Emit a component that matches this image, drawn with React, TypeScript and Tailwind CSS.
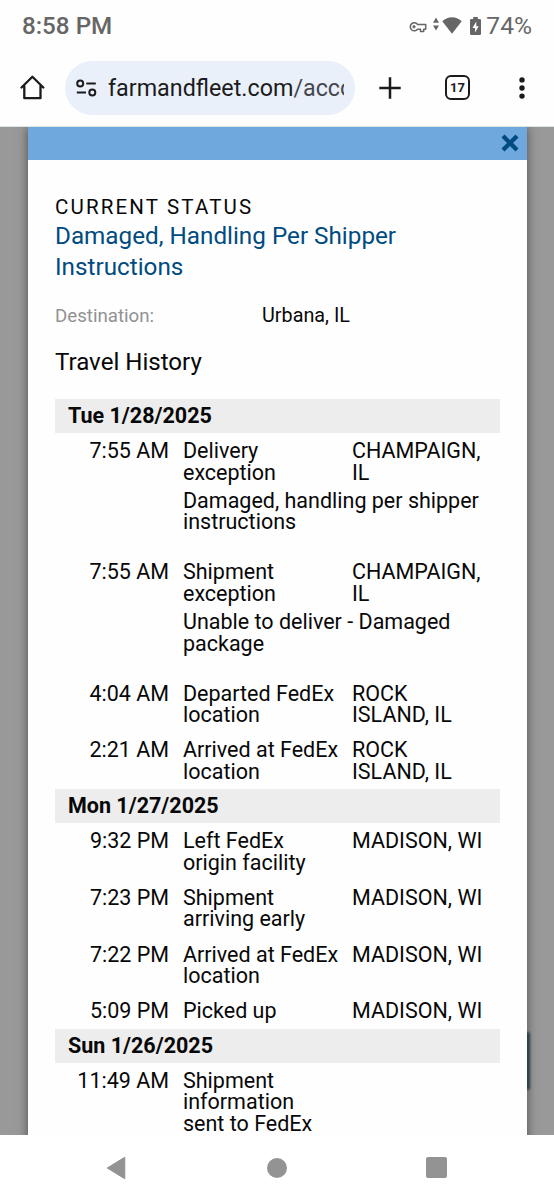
type Event = {
  time: string;
  status: string[];
  place: string[];
  detail?: string[];
};

type Day = { date: string; events: Event[] };

const days: Day[] = [
  {
    date: "Tue 1/28/2025",
    events: [
      {
        time: "7:55 AM",
        status: ["Delivery", "exception"],
        place: ["CHAMPAIGN,", "IL"],
        detail: ["Damaged, handling per shipper", "instructions"],
      },
      {
        time: "7:55 AM",
        status: ["Shipment", "exception"],
        place: ["CHAMPAIGN,", "IL"],
        detail: ["Unable to deliver - Damaged", "package"],
      },
      { time: "4:04 AM", status: ["Departed FedEx", "location"], place: ["ROCK", "ISLAND, IL"] },
      { time: "2:21 AM", status: ["Arrived at FedEx", "location"], place: ["ROCK", "ISLAND, IL"] },
    ],
  },
  {
    date: "Mon 1/27/2025",
    events: [
      { time: "9:32 PM", status: ["Left FedEx", "origin facility"], place: ["MADISON, WI"] },
      { time: "7:23 PM", status: ["Shipment", "arriving early"], place: ["MADISON, WI"] },
      { time: "7:22 PM", status: ["Arrived at FedEx", "location"], place: ["MADISON, WI"] },
      { time: "5:09 PM", status: ["Picked up"], place: ["MADISON, WI"] },
    ],
  },
  {
    date: "Sun 1/26/2025",
    events: [
      { time: "11:49 AM", status: ["Shipment", "information", "sent to FedEx"], place: [] },
    ],
  },
];

function Lines({ lines }: { lines: string[] }) {
  return (
    <div className="whitespace-nowrap">
      {lines.map((line) => (
        <div key={line}>{line}</div>
      ))}
    </div>
  );
}

function EventRow({ event }: { event: Event }) {
  return (
    <div className="text-[21.5px] leading-[21.4px]">
      <div className="grid grid-cols-[114px_155px_1fr] gap-x-[14px] py-[6.95px]">
        <div className="whitespace-nowrap text-right">{event.time}</div>
        <Lines lines={event.status} />
        <Lines lines={event.place} />
      </div>
      {event.detail && (
        <div className="pb-[21.6px] pl-[128px]">
          <Lines lines={event.detail} />
        </div>
      )}
    </div>
  );
}

function StatusBar() {
  return (
    <header className="flex h-[53px] items-center justify-between pl-[22px] pr-[22px] text-[#666]">
      <span className="text-[24.2px] font-medium leading-none">8:58 PM</span>
      <div className="flex items-center">
        <svg width="18" height="12" viewBox="0 0 18 12" fill="none" stroke="currentColor" strokeWidth="1.5">
          <path d="M8.5 3.4A4 4 0 1 0 8.5 8.2H11.5V10.4H14.7V8.2H16.7V3.4Z" strokeLinejoin="round" />
          <circle cx="5" cy="5.8" r="1.2" fill="currentColor" strokeWidth="0.8" />
        </svg>
        <svg className="ml-[6px] mt-[-6px]" width="6" height="14" viewBox="0 0 6 14" fill="currentColor">
          <path d="M0 5.8 3 .5 6 5.8ZM0 8.4H6L3 13.5Z" />
        </svg>
        <svg className="ml-[3px] mt-[-3px]" width="20" height="17" viewBox="0 0 20 17" fill="currentColor">
          <path d="M.3 4.3Q4.8.3 10 .3T19.7 4.3L10 16.7Z" />
        </svg>
        <svg className="ml-[8.5px] mt-[-2px]" width="11" height="18" viewBox="0 0 11 18">
          <path d="M3.2 0H7.8V2H9.8Q11 2 11 3.2V16.8Q11 18 9.8 18H1.2Q0 18 0 16.8V3.2Q0 2 1.2 2H3.2Z" fill="currentColor" />
          <path d="M6.3 4.5 2.5 11H5V15.6L8.7 9.2H6.3Z" fill="white" />
        </svg>
        <span className="ml-[5px] text-[24.6px] leading-none">74%</span>
      </div>
    </header>
  );
}

function BrowserBar() {
  return (
    <div className="flex h-[74px] items-center border-b border-[#dde5e3] pb-[4px] pl-[20px] text-[#1b1b1d]">
      <svg width="25" height="25" viewBox="0 0 25 25" fill="none" stroke="currentColor" strokeWidth="2.3" strokeLinejoin="round" strokeLinecap="round">
        <path d="M1.5 12.5 12.4 1.8 23.3 12.5M4.3 11V23.2H20.5V11" />
      </svg>
      <div className="ml-[20px] flex h-[54px] w-[290px] items-center rounded-full bg-[#eaf0fa] pl-[11px] pr-[10px]">
        <svg className="shrink-0" width="21" height="18" viewBox="0 0 21 18" fill="none" stroke="currentColor" strokeWidth="2">
          <circle cx="4.2" cy="4.5" r="3" />
          <path d="M10.3 4.5H19.8M.8 13.5H10" />
          <circle cx="16.3" cy="13.5" r="3" />
        </svg>
        <div className="ml-[11px] w-[236px] overflow-hidden whitespace-nowrap pt-px text-[23.3px] leading-[34px]">
          farmandfleet.com<span className="text-[#46484d]">/acco</span>
        </div>
      </div>
      <svg className="ml-[24px]" width="22" height="22" viewBox="0 0 22 22" fill="none" stroke="currentColor" strokeWidth="2.5">
        <path d="M11 .3V21.7M.3 11H21.7" />
      </svg>
      <div className="ml-[44px] flex h-[25px] w-[25px] items-center justify-center rounded-[6px] border-[2.5px] border-current text-[13px] font-bold leading-none">
        17
      </div>
      <svg className="ml-[49px]" width="6" height="22" viewBox="0 0 6 22" fill="currentColor">
        <circle cx="3" cy="2.9" r="2.7" />
        <circle cx="3" cy="11" r="2.7" />
        <circle cx="3" cy="19.1" r="2.7" />
      </svg>
    </div>
  );
}

function NavigationBar() {
  return (
    <nav className="flex h-[65px] shrink-0 items-center bg-white pl-[106px] text-[#939393]">
      <svg width="20" height="24" viewBox="0 0 20 24" fill="currentColor" stroke="currentColor" strokeLinejoin="round">
        <path d="M1.2 12 18.8 1.2V22.8Z" />
      </svg>
      <div className="ml-[141px] h-[20px] w-[20px] rounded-full bg-[#939393]" />
      <div className="ml-[139px] h-[21px] w-[21px] rounded-[2px] bg-[#939393]" />
    </nav>
  );
}

export default function App() {
  return (
    <div className="flex h-[1200px] w-[554px] flex-col overflow-hidden bg-[#fefefe] font-['Roboto',sans-serif] text-[#080808]">
      <StatusBar />
      <BrowserBar />
      <main className="relative h-[1008px] overflow-hidden bg-[#999] pl-[28px] pr-[27px]">
        <div className="absolute right-[24px] top-[905px] h-[58px] w-[4px] rounded-[2px] bg-[#365257] blur-[1px]" />
        <section className="relative h-[1040px] bg-[#fefefe] shadow-[0_0_10px_rgba(0,0,0,0.5)]">
          <div className="flex h-[33px] items-center justify-end bg-[#6fa8dc] pb-px pr-[8px]">
            <svg width="18" height="18" viewBox="0 0 18 18" stroke="#004b80" strokeWidth="4.3">
              <path d="M2 2 16 16M16 2 2 16" />
            </svg>
          </div>
          <div className="px-[27px] pt-[34px]">
            <h2 className="text-[20.5px] leading-[26px] tracking-[2.15px]">CURRENT STATUS</h2>
            <div className="pt-[0.5px] text-[24.25px] leading-[31.5px] text-[#004b80]">
              <Lines lines={["Damaged, Handling Per Shipper", "Instructions"]} />
            </div>
            <div className="mt-[20.5px] flex h-[24px] items-center leading-[24px]">
              <span className="w-[207px] text-[18.7px] text-[#929292]">Destination:</span>
              <span className="text-[19.8px]">Urbana, IL</span>
            </div>
            <h3 className="mt-[19px] text-[24.1px] leading-[30px]">Travel History</h3>
            <div className="mt-[22px]">
              {days.map((day) => (
                <div key={day.date}>
                  <h4 className="flex h-[34.4px] items-center bg-[#ededed] pl-[13px] text-[21.5px] font-bold">
                    {day.date}
                  </h4>
                  {day.events.map((event) => (
                    <EventRow key={event.time + event.status[0]} event={event} />
                  ))}
                </div>
              ))}
            </div>
          </div>
        </section>
      </main>
      <NavigationBar />
    </div>
  );
}
